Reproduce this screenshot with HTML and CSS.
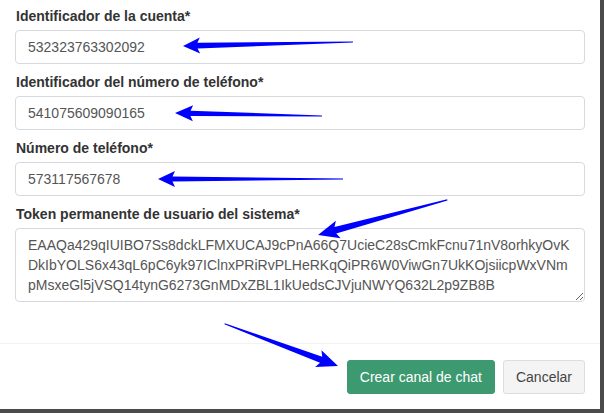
FILE: index.html
```html
<!DOCTYPE html>
<html lang="es">
<head>
<meta charset="utf-8">
<title>Crear canal de chat</title>
<link rel="stylesheet" href="styles.css">
</head>
<body>
<div class="page">
  <div class="modal">
    <div class="modal-body">
      <div class="form-group">
        <label class="label">Identificador de la cuenta*</label>
        <input class="control" type="text" value="532323763302092">
      </div>
      <div class="form-group">
        <label class="label">Identificador del número de teléfono*</label>
        <input class="control" type="text" value="541075609090165">
      </div>
      <div class="form-group">
        <label class="label">Número de teléfono*</label>
        <input class="control" type="text" value="573117567678">
      </div>
      <div class="form-group last">
        <label class="label">Token permanente de usuario del sistema*</label>
        <textarea class="control area" rows="3">EAAQa429qIUIBO7Ss8dckLFMXUCAJ9cPnA66Q7UcieC28sCmkFcnu71nV8orhkyOvKDkIbYOLS6x43qL6pC6yk97IClnxPRiRvPLHeRKqQiPR6W0ViwGn7UkKOjsiicpWxVNmpMsxeGl5jVSQ14tynG6273GnMDxZBL1IkUedsCJVjuNWYQ632L2p9ZB8B</textarea>
      </div>
    </div>
    <div class="modal-footer">
      <button class="btn btn-olive" type="button">Crear canal de chat</button>
      <button class="btn btn-default" type="button">Cancelar</button>
    </div>
  </div>
  <svg class="arrows" width="604" height="413" viewBox="0 0 604 413" aria-hidden="true">
    <g fill="#0000ff">
      <polygon transform="translate(183,46) rotate(-1.35)" points="0,0 17,-8 14.5,-2.8 170,-0.6 170,0.6 14.5,2.8 17,8"/>
      <polygon transform="translate(175,113) rotate(1.17)" points="0,0 18,-8 15.5,-2.6 147,-0.6 147,0.6 15.5,2.6 18,8"/>
      <polygon transform="translate(158,179) rotate(0)" points="0,0 17,-8 14.5,-2.6 185,-0.5 185,0.5 14.5,2.6 17,8"/>
      <polygon transform="translate(318,235) rotate(-15.2)" points="0,0 21,-9 18,-3.4 134,-0.6 134,0.6 18,3.4 21,9"/>
      <polygon transform="translate(338,366) rotate(200.4)" points="0,0 21,-9 18,-3.2 121,-0.5 121,0.5 18,3.2 21,9"/>
    </g>
  </svg>
</div>
</body>
</html>
```

FILE: styles.css
```css
html, body {
  margin: 0;
  padding: 0;
}

body {
  background: #4b4b4b;
  font-family: "Liberation Sans", Arial, sans-serif;
  font-size: 14px;
  line-height: 20px;
  color: #333;
}

.page {
  position: relative;
  width: 604px;
  height: 413px;
  overflow: hidden;
}

.modal {
  width: 600px;
  height: 409px;
  background: #fff;
  display: flex;
  flex-direction: column;
}

.modal-body {
  padding: 6px 15px 41px 15px;
  display: flex;
  flex-direction: column;
  gap: 8px;
}

.form-group {
  display: flex;
  flex-direction: column;
}

.label {
  font-weight: bold;
  color: #333;
  margin: 0 1px 4px;
  line-height: 20px;
}

.control {
  box-sizing: border-box;
  width: 570px;
  height: 34px;
  margin: 0;
  padding: 6px 12px;
  border: 1px solid #d6d9e0;
  border-radius: 4px;
  font-family: "Liberation Sans", Arial, sans-serif;
  font-size: 14px;
  line-height: 20px;
  color: #555;
  background: #fff;
  outline: none;
}

.area {
  height: 74px;
  resize: vertical;
  overflow: hidden;
}

.modal-footer {
  border-top: 1px solid #f2f2f2;
  padding: 16px 15px 15px;
  display: flex;
  justify-content: flex-end;
  gap: 8px;
}

.btn {
  box-sizing: border-box;
  height: 34px;
  padding: 6px 12px;
  border: 1px solid transparent;
  border-radius: 3px;
  font-family: "Liberation Sans", Arial, sans-serif;
  font-size: 14px;
  line-height: 20px;
  cursor: pointer;
}

.btn-olive {
  background: #3d9970;
  border-color: #3d9970;
  color: #fff;
}

.btn-default {
  background: #f4f4f4;
  border-color: #dddddd;
  color: #444;
}

.arrows {
  position: absolute;
  top: 0;
  left: 0;
  pointer-events: none;
}
```
